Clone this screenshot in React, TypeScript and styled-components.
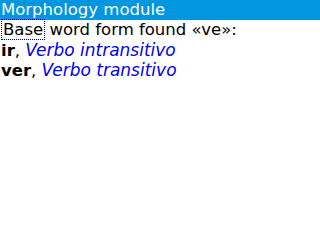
import React from "react";
import styled, { createGlobalStyle } from "styled-components";

const GlobalStyle = createGlobalStyle`
  html, body {
    margin: 0;
    padding: 0;
    background: #ffffff;
  }
  body {
    font-family: "DejaVu Sans", "Liberation Sans", sans-serif;
  }
`;

const Screen = styled.div`
  width: 320px;
  height: 240px;
  background: #ffffff;
  overflow: hidden;
  font-size: 16.5px;
  line-height: 20px;
  color: #000000;
`;

const TitleBar = styled.div`
  height: 20px;
  background: #0096e0;
  color: #ffffff;
  padding-left: 1px;
  white-space: nowrap;
`;

const Line = styled.div`
  height: 20px;
  padding-left: 1px;
  white-space: nowrap;
`;

const HeaderLine = styled(Line)`
  line-height: 20.5px;
`;

const Focused = styled.span`
  margin-left: 1px;
  padding: 0 1px;
  outline: 1px dotted #000090;
`;

const Word = styled.b`
  font-weight: bold;
`;

const Gloss = styled.i`
  font-style: italic;
  font-size: 17px;
  color: #0000f0;
`;

const results = [
  { word: "ir", gloss: "Verbo intransitivo" },
  { word: "ver", gloss: "Verbo transitivo" },
];

export default function App() {
  return (
    <>
      <GlobalStyle />
      <Screen>
        <TitleBar>Morphology module</TitleBar>
        <HeaderLine>
          <Focused>Base</Focused> word form found «ve»:
        </HeaderLine>
        {results.map((r) => (
          <Line key={r.word}>
            <Word>{r.word}</Word>, <Gloss>{r.gloss}</Gloss>
          </Line>
        ))}
      </Screen>
    </>
  );
}
